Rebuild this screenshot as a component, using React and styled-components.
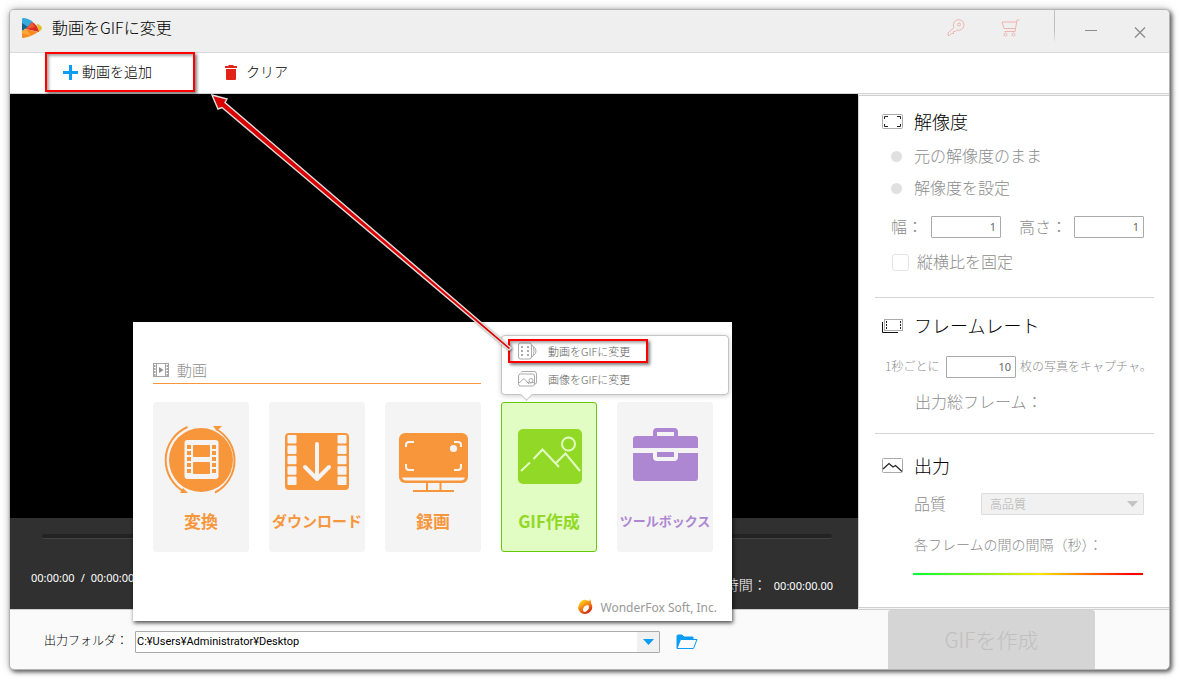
import React from "react";
import styled, { createGlobalStyle } from "styled-components";

const GlobalStyle = createGlobalStyle`
  * {
    box-sizing: border-box;
  }
  body {
    margin: 0;
    background: #fff;
    color: #000;
    font-family: "Noto Sans", "Noto Sans CJK JP", sans-serif;
    font-size: 12px;
  }
  button, input, select {
    font-family: inherit;
    font-weight: inherit;
    margin: 0;
  }
  svg {
    display: block;
    flex-shrink: 0;
  }
`;

const JP = `"Noto Sans CJK JP", sans-serif`;

const Page = styled.div`
  min-height: 100vh;
  display: flex;
  padding: 9px 10px 10px 9px;
`;

const Window = styled.div`
  position: relative;
  flex: 1;
  display: flex;
  flex-direction: column;
  border: 1px solid #b4b4b4;
  border-radius: 5px;
  background: #fafafa;
  box-shadow: 2px 2px 4px rgba(0, 0, 0, 0.6), 0 0 8px rgba(0, 0, 0, 0.25);
  font-family: ${JP};
  font-weight: 300;
`;

const TitleBar = styled.header`
  height: 43px;
  display: flex;
  align-items: flex-start;
  padding: 0 19px 0 12px;
  background: #efefef;
  border-bottom: 1px solid #dadada;
  border-radius: 4px 4px 0 0;
`;

const Title = styled.h1`
  flex: 1;
  display: flex;
  align-items: center;
  gap: 10px;
  height: 36px;
  margin: 0;
  font-size: 16px;
  font-weight: inherit;
  line-height: 20px;
`;

const TitleText = styled.span`
  padding-bottom: 2px;
`;

const IconButton = styled.button`
  display: flex;
  align-items: center;
  justify-content: center;
  width: 20px;
  height: 36px;
  padding: 0;
  border: 0;
  background: none;
  color: ${(p) => p.$color || "#8c8c8c"};
`;

const TitleTools = styled.div`
  display: flex;
  gap: 34px;
  padding-right: 34px;
`;

const TitleDivider = styled.div`
  width: 1px;
  height: 34px;
  background: linear-gradient(#c0c0c0 60%, #efefef);
`;

const WindowButtons = styled.div`
  display: flex;
  gap: 29px;
  padding-left: 26px;
`;

const Toolbar = styled.div`
  display: flex;
  height: 41px;
  padding-left: 35px;
  background: #fff;
  border-bottom: 1px solid #d4d4d4;
`;

const ToolButton = styled.button`
  position: relative;
  display: flex;
  align-items: center;
  gap: ${(p) => p.$gap}px;
  min-width: 150px;
  padding: 0 ${(p) => p.$pad}px 2px;
  border: 0;
  background: none;
  font-size: 14px;
  color: #000;
`;

const ToolText = styled.span`
  padding-bottom: 2px;
`;

const Highlight = styled.span`
  position: absolute;
  inset: ${(p) => p.$inset};
  border: 2px solid #f00;
  box-shadow: 2px 2px 3px rgba(0, 0, 0, 0.5), inset 2px 2px 3px rgba(0, 0, 0, 0.35);
  pointer-events: none;
`;

const Main = styled.main`
  flex: 1;
  display: grid;
  grid-template-columns: 1fr 311px;
  border-bottom: 1px solid #cfcfcf;
`;

const Player = styled.section`
  display: flex;
  flex-direction: column;
  background: #000;
`;

const Video = styled.div`
  flex: 1;
`;

const Controls = styled.div`
  height: 91px;
  padding: 16px 25px 0 21px;
  background: #303030;
  color: #fff;
`;

const Groove = styled.div`
  height: 5px;
  margin: 0 1px 0 11px;
  border-radius: 3px;
  background: #232323;
  border-bottom: 1px solid #444;
`;

const Times = styled.div`
  display: flex;
  justify-content: space-between;
  margin-top: 26px;
  font-family: "Noto Sans", "Noto Sans CJK JP", sans-serif;
  font-size: 11px;
  font-weight: 400;
`;

const TimeGroup = styled.div`
  display: flex;
  align-items: center;
  gap: ${(p) => p.$gap}px;
  height: 24px;
  margin-top: ${(p) => p.$down || 0}px;
`;

const TimeLabel = styled.span`
  padding-bottom: 2px;
  font-family: ${JP};
  font-size: 14px;
  font-weight: 300;
`;

const SideColumn = styled.aside`
  display: flex;
  padding: 1px 0;
  background: #f4f4f4;
`;

const Side = styled.div`
  flex: 1;
  padding: 0 15px 0 16px;
  border: solid #d0d0d0;
  border-width: 1px 0 1px 1px;
  background: #fff;
`;

const Section = styled.section`
  padding: ${(p) => p.$pad};
  border-bottom: ${(p) => (p.$last ? "0" : "1px solid #d4d4d4")};
  color: #8c8c8c;
  font-size: 16px;
`;

const Heading = styled.h2`
  display: flex;
  align-items: center;
  gap: 11px;
  height: 24px;
  margin: 0;
  padding-left: 7px;
  color: #000;
  font-size: 18px;
  font-weight: inherit;
  line-height: 22px;
`;

const HeadingText = styled.span`
  padding-bottom: 2px;
`;

const Row = styled.div`
  display: flex;
  align-items: center;
  height: 24px;
  margin-top: ${(p) => p.$top}px;
  padding-left: ${(p) => p.$left}px;
  font-size: ${(p) => p.$size || 16}px;
  line-height: 22px;
  white-space: nowrap;
`;

const RowText = styled.span`
  padding-bottom: 2px;
`;

const OptionLabel = styled.label`
  display: flex;
  align-items: center;
  gap: ${(p) => p.$gap}px;
`;

const Radio = styled.input`
  appearance: none;
  width: 11px;
  height: 11px;
  border-radius: 50%;
  background: #e0e0e0;
`;

const Checkbox = styled.input`
  appearance: none;
  width: 17px;
  height: 17px;
  border: 1px solid #e4e4e4;
  border-radius: 3px;
  background: #fff;
`;

const FieldLabel = styled.label`
  width: ${(p) => p.$width}px;
  padding-bottom: 2px;
`;

const NumberInput = styled.input`
  width: 70px;
  height: 22px;
  margin-right: ${(p) => p.$right || 0}px;
  padding: 0 4px 1px;
  border: 1px solid #aaa;
  border-radius: 1px;
  background: #fff;
  color: #666;
  font-family: "Noto Sans", sans-serif;
  font-size: 11px;
  font-weight: 400;
  text-align: right;
`;

const SelectBox = styled.div`
  position: relative;
  display: flex;
  flex: ${(p) => p.$flex};
  height: 22px;
`;

const Select = styled.select`
  appearance: none;
  width: 100%;
  padding: 0 24px 2px ${(p) => p.$pad}px;
  border: 1px solid ${(p) => p.$border};
  border-radius: 1px;
  background: ${(p) => p.$bg};
  color: ${(p) => p.$color};
  opacity: 1;
  font-size: ${(p) => p.$size}px;
`;

const SelectArrow = styled.span`
  position: absolute;
  top: 1px;
  right: 1px;
  bottom: 1px;
  display: flex;
  align-items: center;
  justify-content: center;
  width: 22px;
  background: #f1f1f1;
  color: ${(p) => p.$color};
  pointer-events: none;
`;

const Interval = styled.input`
  appearance: none;
  display: block;
  width: 230px;
  height: 2px;
  margin: 16px 0 0 38px;
  background: linear-gradient(90deg, #00ff30, #f8e800 55%, #ff0000 95%);
  box-shadow: 0 0 1px rgba(0, 0, 0, 0.4);
  &::-webkit-slider-thumb {
    appearance: none;
    width: 0;
    height: 0;
  }
`;

const Footer = styled.footer`
  display: flex;
  align-items: center;
  height: 59px;
  padding: 0 74px 0 34px;
`;

const FolderLabel = styled.label`
  width: 91px;
  font-size: 12px;
`;

const FolderButton = styled.button`
  margin: 5px 190px 0 16px;
  width: 22px;
  padding: 0;
  border: 0;
  background: none;
`;

const PathBox = styled(SelectBox)`
  margin-top: 5px;
  font-family: Roboto, "Noto Sans", sans-serif;
  font-weight: 400;
`;

const CreateButton = styled.button`
  width: 207px;
  height: 59px;
  padding: 0 0 2px;
  border: 0;
  border-radius: 3px 3px 0 0;
  background: #d5d5d5;
  color: #c0c0c0;
  font-size: 21px;
`;

/* launcher dialog over the preview */
const Launcher = styled.div`
  position: absolute;
  left: 123px;
  top: 312px;
  width: 599px;
  height: 299px;
  padding: 38px 19px 0 20px;
  background: #fff;
  box-shadow: 1px 2px 4px rgba(0, 0, 0, 0.7);
`;

const LauncherHead = styled.div`
  display: flex;
  align-items: center;
  gap: 8px;
  width: 328px;
  height: 24px;
  padding-bottom: 4px;
  border-bottom: 1px solid #f8963c;
  color: #909090;
  font-size: 15px;
`;

const Cards = styled.div`
  display: flex;
  gap: 20px;
  margin-top: 18px;
`;

const Card = styled.button`
  display: flex;
  flex: 0 0 96px;
  flex-direction: column;
  align-items: center;
  height: 150px;
  padding: 20px 0 0;
  border: 1px solid ${(p) => (p.$active ? "#66c80c" : "#f4f4f4")};
  border-radius: 3px;
  background: ${(p) => (p.$active ? "#e2fdc4" : "#f4f4f4")};
  color: ${(p) => p.$color};
`;

const CardLabel = styled.span`
  margin-top: 12px;
  font-size: ${(p) => p.$size || 17}px;
  font-weight: 700;
  line-height: 24px;
  white-space: nowrap;
`;

const Brand = styled.div`
  display: flex;
  align-items: center;
  justify-content: flex-end;
  gap: 7px;
  height: 24px;
  margin: 43px -4px 0 0;
  color: #999;
  font-family: "Noto Sans", sans-serif;
  font-size: 12px;
  font-weight: 400;
`;

const Menu = styled.div`
  position: absolute;
  left: 368px;
  top: 13px;
  width: 228px;
  height: 60px;
  border: 1px solid #c4c4c4;
  border-radius: 4px;
  background: #fff;
  box-shadow: 0 1px 5px rgba(0, 0, 0, 0.2);
  &::after {
    content: "";
    position: absolute;
    left: 20px;
    bottom: -5px;
    width: 8px;
    height: 8px;
    border: solid #c4c4c4;
    border-width: 0 1px 1px 0;
    background: #fff;
    transform: rotate(45deg);
  }
`;

const MenuItem = styled.button`
  position: relative;
  display: flex;
  align-items: center;
  gap: 11px;
  width: 100%;
  height: 28px;
  padding: 2px 0 0 16px;
  border: 0;
  background: none;
  color: #606060;
  font-size: 11px;
`;

const Pointer = styled.svg`
  position: absolute;
  left: 0;
  top: 0;
  overflow: visible;
  pointer-events: none;
  filter: drop-shadow(1px 1px 1px rgba(0, 0, 0, 0.4));
`;

function Logo() {
  return (
    <svg width="20" height="20" viewBox="0 0 20 20">
      <path d="M0 1Q0 0 1 0Q6 0 11 4L5 11L0 8Z" fill="#38a9dc" />
      <path d="M0 5L6 9L0 13Z" fill="#17638c" />
      <path d="M15 5.500Q20 8 20 10Q20 12 16 14Z" fill="#e5bd2b" />
      <path d="M10 4Q15 6 17 14L4 11Z" fill="#df2b20" />
      <path d="M10 4L13 9L4 11Z" fill="#ee5a35" />
      <path d="M4 11L16 14Q9 19 1 20Q0 20 0 19V13Z" fill="#f98a20" />
      <path d="M4 11L9 18L0 15V13Z" fill="#ffa63c" />
    </svg>
  );
}

function KeyIcon() {
  return (
    <svg width="18" height="18" viewBox="0 0 18 18" fill="none" stroke="currentColor">
      <path d="M7 8.500A5.300 5.300 0 1 1 10 11L8.500 12.500H6.500V14.500H4.500L2.500 16.500H1V14Z" />
      <circle cx="12" cy="5.500" r="1.500" />
    </svg>
  );
}

function CartIcon() {
  return (
    <svg width="19" height="18" viewBox="0 0 19 18" fill="none" stroke="currentColor">
      <path d="M18.500 1H16L14 12.500H3.500M15.500 3H1L3 9.500H14.500" />
      <circle cx="4.500" cy="15.500" r="1.500" />
      <circle cx="12.500" cy="15.500" r="1.500" />
    </svg>
  );
}

function DownArrow() {
  return (
    <svg width="11" height="6" viewBox="0 0 11 6">
      <path d="M0 0H11L5.500 6Z" fill="currentColor" />
    </svg>
  );
}

function ResolutionIcon() {
  return (
    <svg width="21" height="16" viewBox="0 0 21 16" fill="none">
      <rect x="0.500" y="0.500" width="20" height="14" rx="1" stroke="#aaa" />
      <path d="M2.500 5V2.500H6M15 2.500H18.500V5M18.500 10V12.500H15M6 12.500H2.500V10" stroke="#222" />
    </svg>
  );
}

function FrameRateIcon() {
  return (
    <svg width="21" height="16" viewBox="0 0 21 16" fill="none">
      <rect x="2.500" y="1.500" width="18" height="11" stroke="#aaa" />
      <path d="M4.500 3V12M18.500 3V12" stroke="#222" strokeDasharray="2 1" />
      <path d="M0.500 4V14.500H16" stroke="#111" />
    </svg>
  );
}

function OutputIcon() {
  return (
    <svg width="21" height="16" viewBox="0 0 21 16" fill="none">
      <rect x="0.500" y="0.500" width="20" height="14" rx="1" stroke="#aaa" />
      <path d="M1 11L7 5.500L11 9L13.500 7.500L20 13.500" stroke="#222" strokeWidth="1.200" />
    </svg>
  );
}

function FilmIcon() {
  return (
    <svg width="16" height="14" viewBox="0 0 16 14" fill="none" stroke="#a4a4a4">
      <rect x="0.500" y="0.500" width="15" height="13" />
      <path d="M3.500 1V13M12.500 1V13" />
      <path d="M1.500 2V13M14.500 2V13" strokeWidth="2" strokeDasharray="2 1" />
      <path d="M6 4L10.500 7L6 10Z" fill="#909090" stroke="none" />
    </svg>
  );
}

function ConvertIcon() {
  const holes = [22, 28, 34, 40, 46];
  return (
    <svg width="74" height="74" viewBox="0 0 74 74" fill="currentColor">
      <circle cx="37" cy="37" r="32" />
      <path
        d="M23.500 4A36 36 0 0 0 21 69M52 6A36 36 0 0 1 51 69.500"
        fill="none"
        stroke="currentColor"
        strokeWidth="2"
      />
      <path d="M16 70L19 65L24 70ZM49 3H58L53 8Z" />
      <rect x="20.500" y="17" width="34" height="39" rx="3" fill="#f4f4f4" />
      <rect x="29" y="22" width="17" height="12" rx="1" />
      <rect x="29" y="39" width="17" height="12" rx="1" />
      {holes.map((y) => (
        <path key={y} d={`M23 ${y}h4v4h-4zM48 ${y}h4v4h-4z`} />
      ))}
    </svg>
  );
}

function DownloadIcon() {
  const cells = [12, 22.4, 32.8, 43.2, 53.6];
  return (
    <svg width="74" height="74" viewBox="0 0 74 74">
      <rect x="5" y="10" width="64" height="57" rx="4" fill="currentColor" />
      {cells.map((y) => (
        <g key={y} fill="#f4f4f4">
          <rect x="7.500" y={y} width="9" height="8.500" rx="1" />
          <rect x="57.500" y={y} width="9" height="8.500" rx="1" />
        </g>
      ))}
      <path
        d="M37 21V56M25 44L37 56L49 44"
        fill="none"
        stroke="#f4f4f4"
        strokeWidth="4"
        strokeLinecap="round"
        strokeLinejoin="round"
      />
    </svg>
  );
}

function RecordIcon() {
  return (
    <svg width="74" height="74" viewBox="0 0 74 74" fill="none">
      <rect x="3" y="10" width="69" height="50" rx="6" fill="currentColor" />
      <path d="M6 54.500H69Q68 57.500 65 57.500H10Q7 57.500 6 54.500Z" fill="#f4f4f4" />
      <path d="M31 60V68M44.500 60V68M17 68H58" stroke="currentColor" strokeWidth="2" />
      <path
        d="M10 24V22Q10 19 13 19H18M58 19H62Q65 19 65 22V24M65 41V44Q65 47 62 47H58M18 47H13Q10 47 10 44V41"
        stroke="#f4f4f4"
        strokeWidth="2"
      />
      <circle cx="57.500" cy="25.500" r="3.600" fill="#f4f4f4" />
    </svg>
  );
}

function PictureIcon() {
  return (
    <svg width="74" height="74" viewBox="0 0 74 74" fill="none">
      <rect x="6" y="6" width="64" height="55" rx="5" fill="currentColor" />
      <g stroke="#e2fdc4" strokeWidth="2">
        <circle cx="56.500" cy="21" r="6.500" />
        <path d="M9 48L18 39.500M21.500 36L30.500 26.500L47 44M43.500 40.500L53.500 30.500L68 48" />
      </g>
    </svg>
  );
}

function ToolboxIcon() {
  return (
    <svg width="74" height="74" viewBox="0 0 74 74" fill="currentColor">
      <path d="M5 25V16Q5 13 8 13H25V9Q25 5 29 5H46Q50 5 50 9V13H67Q70 13 70 16V25ZM29 9V13H46V9Z" fillRule="evenodd" />
      <path d="M5 30H25V34Q25 38 29 38H46Q50 38 50 34V30H70V55Q70 58 67 58H8Q5 58 5 55Z" />
      <rect x="29" y="29" width="17" height="5" />
    </svg>
  );
}

function MenuFilmIcon() {
  return (
    <svg width="19" height="18" viewBox="0 0 19 18" fill="none" stroke="#aaa">
      <rect x="0.500" y="1" width="13" height="16" rx="2" />
      <path d="M14 3Q16 4 16 9T14 15M16 5Q18 6 18 9T16 13" />
      <path d="M4 4V15M10 4V15" strokeWidth="2" strokeDasharray="2 2" />
    </svg>
  );
}

function MenuPictureIcon() {
  return (
    <svg width="19" height="18" viewBox="0 0 19 18" fill="none" stroke="#aaa">
      <rect x="0.500" y="4" width="16" height="12" rx="2" />
      <path d="M3 2.500Q3 1.500 5 1.500H16Q18.500 1.500 18.500 4V12Q18.500 14 17 14" />
      <path d="M1 13L6 8.500L11 14M9 12L11.500 13L16 12.500" />
      <circle cx="13" cy="10.500" r="2" />
    </svg>
  );
}

function FlameIcon() {
  return (
    <svg width="15" height="16" viewBox="0 0 15 16">
      <defs>
        <linearGradient id="flame" x1="0" y1="0" x2="0.600" y2="1">
          <stop offset="0.200" stopColor="#ffd21c" />
          <stop offset="0.600" stopColor="#f47c12" />
          <stop offset="1" stopColor="#cf2812" />
        </linearGradient>
      </defs>
      <path
        d="M10 2Q12 2 12 0Q13 2 13 4Q15 7 14 10Q12 15 6 15Q1 14 0 9Q1 3 5 1Q8 0 10 2ZM9.500 6Q5 7 5 11Q5 13 7 13Q11 11 11 8Q11 6 9.500 6Z"
        fill="url(#flame)"
        fillRule="evenodd"
      />
    </svg>
  );
}

const tools = [
  { label: "変換", icon: ConvertIcon, color: "#f8963c" },
  { label: "ダウンロード", icon: DownloadIcon, color: "#f8963c", size: 15 },
  { label: "録画", icon: RecordIcon, color: "#f8963c" },
  { label: "GIF作成", icon: PictureIcon, color: "#92d927", active: true },
  { label: "ツールボックス", icon: ToolboxIcon, color: "#ae87d3", size: 13 },
];

function SettingsPanel() {
  return (
    <SideColumn>
      <Side>
        <Section $pad="14px 0 23px">
          <Heading><ResolutionIcon /><HeadingText>解像度</HeadingText></Heading>
          <Row $top={10} $left={16}>
            <OptionLabel $gap={12}>
              <Radio type="radio" name="resolution" disabled />
              <RowText>元の解像度のまま</RowText>
            </OptionLabel>
          </Row>
          <Row $top={8} $left={16}>
            <OptionLabel $gap={12}>
              <Radio type="radio" name="resolution" disabled />
              <RowText>解像度を設定</RowText>
            </OptionLabel>
          </Row>
          <Row $top={15} $left={16}>
            <FieldLabel htmlFor="width" $width={40}>幅：</FieldLabel>
            <NumberInput id="width" defaultValue="1" disabled $right={18} />
            <FieldLabel htmlFor="height" $width={55}>高さ：</FieldLabel>
            <NumberInput id="height" defaultValue="1" disabled />
          </Row>
          <Row $top={11} $left={17}>
            <OptionLabel $gap={8}>
              <Checkbox type="checkbox" disabled />
              <RowText>縦横比を固定</RowText>
            </OptionLabel>
          </Row>
        </Section>
        <Section $pad="16px 0 19px">
          <Heading><FrameRateIcon /><HeadingText>フレームレート</HeadingText></Heading>
          <Row $top={17} $left={10} $size={12}>
            <FieldLabel htmlFor="rate" $width={61}>1秒ごとに</FieldLabel>
            <NumberInput id="rate" defaultValue="10" disabled $right={4} />
            <RowText>枚の写真をキャプチャ。</RowText>
          </Row>
          <Row $top={11} $left={40}><RowText>出力総フレーム：</RowText></Row>
        </Section>
        <Section $pad="20px 0 0" $last>
          <Heading><OutputIcon /><HeadingText>出力</HeadingText></Heading>
          <Row $top={14} $left={39}>
            <FieldLabel htmlFor="quality" $width={67}>品質</FieldLabel>
            <SelectBox $flex="0 0 163px">
              <Select id="quality" disabled $pad={8} $border="#ddd" $bg="#f1f1f1" $color="#b0b0b0" $size={12}>
                <option>高品質</option>
              </Select>
              <SelectArrow $color="#c4c4c4"><DownArrow /></SelectArrow>
            </SelectBox>
          </Row>
          <Row as="label" htmlFor="interval" $top={17} $left={39} $size={14}>
            <RowText>各フレームの間の間隔（秒）：</RowText>
          </Row>
          <Interval id="interval" type="range" disabled />
        </Section>
      </Side>
    </SideColumn>
  );
}

function LauncherDialog() {
  return (
    <Launcher role="dialog" aria-label="WonderFox">
      <LauncherHead><FilmIcon />動画</LauncherHead>
      <Cards>
        {tools.map(({ label, icon: Icon, color, size, active }) => (
          <Card key={label} $color={color} $active={active}>
            <Icon />
            <CardLabel $size={size}>{label}</CardLabel>
          </Card>
        ))}
      </Cards>
      <Brand><FlameIcon />WonderFox Soft, Inc.</Brand>
      <Menu>
        <MenuItem>
          <MenuFilmIcon />動画をGIFに変更
          <Highlight $inset="3px 80px 1px 6px" />
        </MenuItem>
        <MenuItem><MenuPictureIcon />画像をGIFに変更</MenuItem>
      </Menu>
    </Launcher>
  );
}

function App() {
  return (
    <Page>
      <GlobalStyle />
      <Window>
        <TitleBar>
          <Title><Logo /><TitleText>動画をGIFに変更</TitleText></Title>
          <TitleTools>
            <IconButton $color="#efb4b0" aria-label="Register"><KeyIcon /></IconButton>
            <IconButton $color="#efb4b0" aria-label="Buy"><CartIcon /></IconButton>
          </TitleTools>
          <TitleDivider />
          <WindowButtons>
            <IconButton aria-label="Minimize">
              <svg width="12" height="12" viewBox="0 0 12 12" stroke="currentColor">
                <path d="M0 8.500H12" />
              </svg>
            </IconButton>
            <IconButton aria-label="Close">
              <svg width="12" height="20" viewBox="0 0 12 20" stroke="currentColor">
                <path d="M1 9.500L11 19.500M11 9.500L1 19.500" strokeWidth="1.300" />
              </svg>
            </IconButton>
          </WindowButtons>
        </TitleBar>

        <Toolbar>
          <ToolButton $gap={4} $pad={18}>
            <svg width="15" height="15" viewBox="0 0 15 15">
              <path d="M6 0H9V6H15V9H9V15H6V9H0V6H6Z" fill="#0b9df5" />
            </svg>
            <ToolText>動画を追加</ToolText>
            <Highlight $inset="-1px 0 1px 0" />
          </ToolButton>
          <ToolButton $gap={9} $pad={30}>
            <svg width="12" height="15" viewBox="0 0 12 15" fill="#e2231a">
              <path d="M0 1H3L4 0H8L9 1H12V3H0ZM1 4H11V14Q11 15 10 15H2Q1 15 1 14Z" />
            </svg>
            <ToolText>クリア</ToolText>
          </ToolButton>
        </Toolbar>

        <Main>
          <Player>
            <Video />
            <Controls>
              <Groove />
              <Times>
                <TimeGroup $gap={6}>
                  <span>00:00:00</span>
                  <span>/</span>
                  <span>00:00:00</span>
                </TimeGroup>
                <TimeGroup $gap={7} $down={8}>
                  <TimeLabel>時間：</TimeLabel>
                  <span>00:00:00.00</span>
                </TimeGroup>
              </Times>
            </Controls>
          </Player>
          <SettingsPanel />
        </Main>

        <Footer>
          <FolderLabel htmlFor="folder">出力フォルダ：</FolderLabel>
          <PathBox $flex="1">
            <Select id="folder" $pad={1} $border="#aaa" $bg="#fff" $color="#000" $size={11}>
              <option>C:¥Users¥Administrator¥Desktop</option>
            </Select>
            <SelectArrow $color="#0b9df5"><DownArrow /></SelectArrow>
          </PathBox>
          <FolderButton aria-label="Open folder">
            <svg width="22" height="16" viewBox="0 0 22 16" fill="none">
              <path d="M1 14V2Q1 1 2 1H6L8 3H17V5" fill="#0b9df5" stroke="#0b9df5" />
              <path d="M4.500 5.500H21L17.500 14.500H1Z" fill="#fafafa" stroke="#0b9df5" />
            </svg>
          </FolderButton>
          <CreateButton disabled>GIFを作成</CreateButton>
        </Footer>

        <LauncherDialog />
        <Pointer width="1" height="1">
          <path
            d="M202 85L217 89L215 92.500L501 338L499 340L212 97.500L208 99Z"
            fill="#d80000"
            stroke="#e4dcdc"
            strokeWidth="1.400"
          />
        </Pointer>
      </Window>
    </Page>
  );
}

export default App;
